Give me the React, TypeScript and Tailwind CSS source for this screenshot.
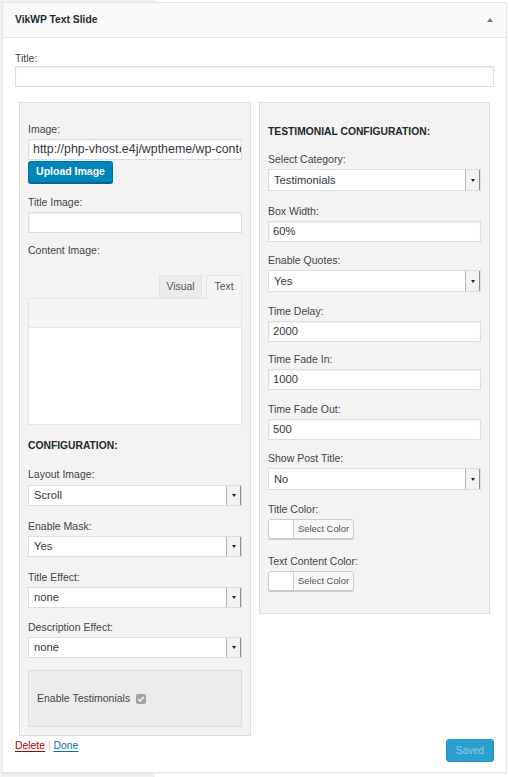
// ─── VikWP Text Slide widget ───────────────────────────────────
// Static recreation of the widget settings form.

const FONT = "font-['Liberation_Sans',Arial,sans-serif]";

function Label({ children, className = '' }: { children: React.ReactNode; className?: string }) {
  return (
    <div className={`h-[18px] text-[10.5px] leading-[18px] text-[#444] ${className}`}>{children}</div>
  );
}

function TextInput({
  value = '',
  className = '',
  text = 'text-[11.2px]',
}: {
  value?: string;
  className?: string;
  text?: string;
}) {
  return (
    <div
      className={`h-[21px] overflow-hidden whitespace-nowrap border border-[#ddd] bg-white pl-[4px] leading-[19px] text-[#32373c] shadow-[inset_0_1px_2px_rgba(0,0,0,0.07)] ${text} ${className}`}
    >
      {value}
    </div>
  );
}

function Select({ value, className = '', short = false }: { value: string; className?: string; short?: boolean }) {
  return (
    <div className={`flex border border-[#ddd] bg-white ${short ? 'h-[21px]' : 'h-[22px]'} ${className}`}>
      <div className={`flex-1 pl-[5px] text-[11.2px] text-[#32373c] ${short ? 'leading-[19px]' : 'leading-[20px]'}`}>
        {value}
      </div>
      <div className="flex w-[15px] items-center justify-center border-l border-r border-l-[#b5b5b5] border-r-[#8f8f8f] bg-[#f2f2f2]">
        <div className="h-0 w-0 border-l-[2.5px] border-r-[2.5px] border-t-[3px] border-l-transparent border-r-transparent border-t-[#222]" />
      </div>
    </div>
  );
}

function ColorButton({ className = '' }: { className?: string }) {
  return (
    <div
      className={`flex h-[20px] w-[86px] overflow-hidden rounded-[3px] border border-[#ccc] bg-[#f7f7f7] shadow-[0_1px_0_#ccc] ${className}`}
    >
      <div className="w-[25px] border-r border-[#ccc] bg-white" />
      <div className="flex-1 text-center text-[9.4px] leading-[18px] text-[#555]">Select Color</div>
    </div>
  );
}

export default function App() {
  return (
    <div
      className={`min-h-[777px] w-[509px] bg-[linear-gradient(to_right,#f1f1f1_155px,#fff_155px)] pl-[2px] pt-[2px] ${FONT}`}
    >
      <div className="w-[505px] border border-[#e5e5e5] bg-white shadow-[0_1px_1px_rgba(0,0,0,0.04)]">
        {/* Header */}
        <div className="flex h-[35px] items-center justify-between border-b border-[#e5e5e5] bg-[#fafafa] pl-3 pr-[13px]">
          <span className="text-[10.3px] font-bold text-[#23282d]">VikWP Text Slide</span>
          <div className="h-0 w-0 border-b-[4px] border-l-[3px] border-r-[3px] border-b-[#72777c] border-l-transparent border-r-transparent" />
        </div>

        <div className="px-3 pt-[12px]">
          <div className="h-[16px] text-[10.5px] leading-[16px] text-[#444]">Title:</div>
          <TextInput />

          {/* Panels */}
          <div className="mt-[15px] flex items-start gap-2 px-1">
            {/* Left panel */}
            <div className="w-[232px] border border-[#dcdcdc] bg-[#f3f3f3] px-2 pb-[8px] pt-[17px]">
              <Label>Image:</Label>
              <TextInput
                className="mt-px"
                text="text-[12.4px]"
                value="http://php-vhost.e4j/wptheme/wp-content/uploads/2017/06/slide.jpg"
              />
              <div className="mt-px flex h-[22px] w-[85px] items-center justify-center rounded-[3px] border border-[#0073aa] border-b-[#006799] bg-[#0085ba] text-[10.5px] font-bold text-white shadow-[0_1px_0_#006799]">
                Upload Image
              </div>

              <Label className="mt-[10px]">Title Image:</Label>
              <TextInput className="mt-px" />

              <Label className="mt-[8px]">Content Image:</Label>

              {/* Editor */}
              <div className="mt-[16px] flex h-[23px] justify-end gap-[4px]">
                <div className="w-[43px] border border-b-0 border-[#e5e5e5] bg-[#ebebeb] text-center text-[10.4px] leading-[22px] text-[#555]">
                  Visual
                </div>
                <div className="relative z-10 -mb-px h-[24px] w-[36px] border border-b-0 border-[#e5e5e5] bg-[#f5f5f5] text-center text-[10.4px] leading-[22px] text-[#555]">
                  Text
                </div>
              </div>
              <div className="border border-[#e5e5e5]">
                <div className="h-[29px] border-b border-[#e5e5e5] bg-[#f5f5f5]" />
                <div className="h-[96px] bg-white" />
              </div>

              <div className="mt-[12px] h-[18px] text-[10.3px] font-bold leading-[18px] text-[#23282d]">
                CONFIGURATION:
              </div>

              <Label className="mt-[10px]">Layout Image:</Label>
              <Select short className="mt-[2px]" value="Scroll" />
              <Label className="mt-[11px]">Enable Mask:</Label>
              <Select short className="mt-px" value="Yes" />
              <Label className="mt-[11px]">Title Effect:</Label>
              <Select short className="mt-px" value="none" />
              <Label className="mt-[10px]">Description Effect:</Label>
              <Select short className="mt-px" value="none" />

              <div className="mt-[12px] flex h-[57px] items-center border border-[#dcdcdc] bg-[#ececec] pl-2">
                <span className="text-[10.5px] text-[#444]">Enable Testimonials</span>
                <div className="ml-[6px] flex h-[10px] w-[10px] items-center justify-center rounded-[2px] bg-[#a3a3a3]">
                  <svg width="8" height="8" viewBox="0 0 8 8" fill="none">
                    <path d="M1.3 4.2 L3.2 6 L6.8 2" stroke="#fff" strokeWidth="1.3" />
                  </svg>
                </div>
              </div>
            </div>

            {/* Right panel */}
            <div className="w-[232px] border border-[#dcdcdc] bg-[#f3f3f3] px-2 pb-[22px] pt-[20px]">
              <div className="h-[18px] text-[10.3px] font-bold leading-[18px] text-[#23282d]">
                TESTIMONIAL CONFIGURATION:
              </div>

              <Label className="mt-[9px]">Select Category:</Label>
              <Select className="mt-px" value="Testimonials" />
              <Label className="mt-[11px]">Box Width:</Label>
              <TextInput className="mt-px" value="60%" />
              <Label className="mt-[9px]">Enable Quotes:</Label>
              <Select className="mt-px" value="Yes" />
              <Label className="mt-[10px]">Time Delay:</Label>
              <TextInput className="mt-px" value="2000" />
              <Label className="mt-[8px]">Time Fade In:</Label>
              <TextInput className="mt-px" value="1000" />
              <Label className="mt-[10px]">Time Fade Out:</Label>
              <TextInput className="mt-px" value="500" />
              <Label className="mt-[9px]">Show Post Title:</Label>
              <Select className="mt-px" value="No" />
              <Label className="mt-[10px]">Title Color:</Label>
              <ColorButton className="mt-px" />
              <Label className="mt-[13px]">Text Content Color:</Label>
              <ColorButton className="mt-px" />
            </div>
          </div>

          {/* Footer */}
          <div className="flex items-start justify-between pb-[10px]">
            <div className="mt-[1px] h-[18px] text-[10.4px] leading-[18px]">
              <a className="text-[#a00] underline underline-offset-2">Delete</a>
              <span className="text-[#ccc]"> | </span>
              <a className="text-[#0073aa] underline underline-offset-2">Done</a>
            </div>
            <div className="mt-[3px] flex h-[23px] w-[48px] items-center justify-center rounded-[3px] border border-[#1e94c4] bg-[#2a9fd0] text-[10px] text-[#8fcbe5]">
              Saved
            </div>
          </div>
        </div>
      </div>
    </div>
  );
}
